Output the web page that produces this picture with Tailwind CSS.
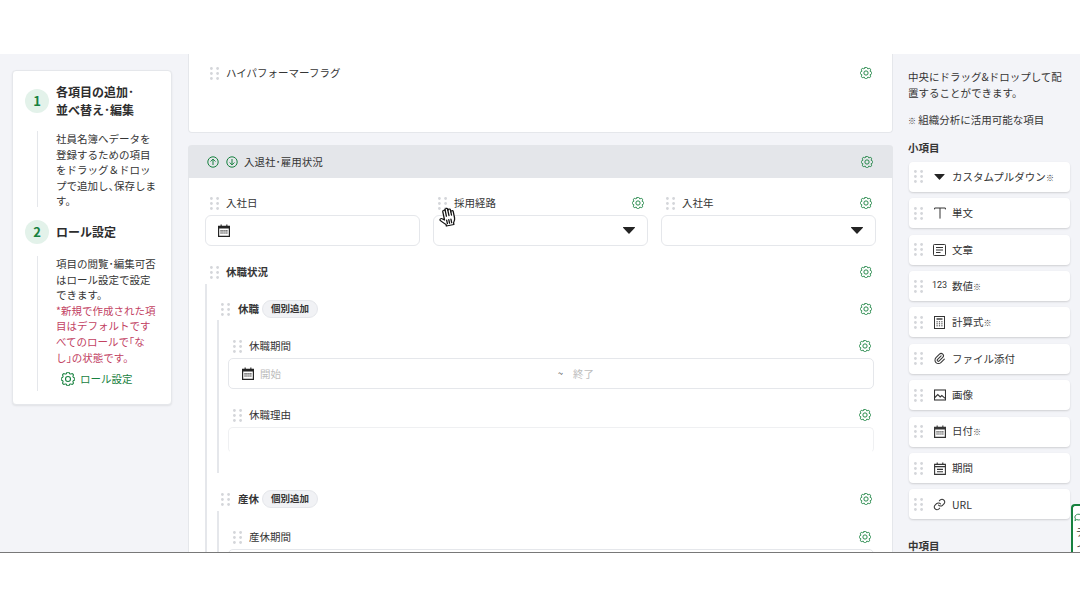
<!DOCTYPE html>
<html lang="ja">
<head>
<meta charset="utf-8">
<script src="https://cdn.jsdelivr.net/npm/@tailwindcss/browser@4"></script>
</head>
<body class="bg-white">
<svg class="hidden" xmlns="http://www.w3.org/2000/svg">
  <symbol id="gear" viewBox="3 3 18 18"><path fill="none" stroke="currentColor" stroke-width="1.4" stroke-linecap="round" stroke-linejoin="round" d="M10.325 4.317c.426-1.756 2.924-1.756 3.35 0a1.724 1.724 0 0 0 2.573 1.066c1.543-.94 3.31.826 2.37 2.37a1.724 1.724 0 0 0 1.065 2.572c1.756.426 1.756 2.924 0 3.35a1.724 1.724 0 0 0-1.066 2.573c.94 1.543-.826 3.31-2.37 2.37a1.724 1.724 0 0 0-2.572 1.065c-.426 1.756-2.924 1.756-3.35 0a1.724 1.724 0 0 0-2.573-1.066c-1.543.94-3.31-.826-2.37-2.37a1.724 1.724 0 0 0-1.065-2.572c-1.756-.426-1.756-2.924 0-3.35a1.724 1.724 0 0 0 1.066-2.573c-.94-1.543.826-3.31 2.37-2.37c1 .608 2.296.07 2.572-1.065z"/><circle cx="12" cy="12" r="3.2" fill="none" stroke="currentColor" stroke-width="1.4"/></symbol>
  <symbol id="drag" viewBox="0 0 9 13"><g fill="#d4d6da"><circle cx="1.4" cy="1.5" r="1.4"/><circle cx="7.6" cy="1.5" r="1.4"/><circle cx="1.4" cy="6.5" r="1.4"/><circle cx="7.6" cy="6.5" r="1.4"/><circle cx="1.4" cy="11.5" r="1.4"/><circle cx="7.6" cy="11.5" r="1.4"/></g></symbol>
  <symbol id="cal" viewBox="0 0 12 13"><path fill="none" stroke="currentColor" stroke-width="1.2" d="M.6 2.4h10.8v10H.6z"/><path fill="currentColor" d="M.6 2h10.8v2.6H.6zM2.6.4h1.1v2H2.6zM8.3.4h1.1v2H8.3zM2.4 6.2h1.3v1.2H2.4zM4.3 6.2h1.3v1.2H4.3zM6.3 6.2h1.3v1.2H6.3zM8.2 6.2h1.3v1.2H8.2zM2.4 8.4h1.3v1.2H2.4zM4.3 8.4h1.3v1.2H4.3zM6.3 8.4h1.3v1.2H6.3zM8.2 8.4h1.3v1.2H8.2z"/></symbol>
  <symbol id="caret" viewBox="0 0 12 7"><path fill="currentColor" d="M.4 0h11.2a.4.4 0 0 1 .3.7L6.5 6.4a.7.7 0 0 1-1 0L.1.7A.4.4 0 0 1 .4 0z"/></symbol>
</svg>

<div class="w-[1080px] h-[608px] overflow-hidden flex flex-col opacity-[0.99] font-['Noto_Sans_CJK_JP','Noto_Sans',sans-serif] text-[#333] text-[10.5px] leading-[15.6px]">
  <div class="h-[54px] shrink-0 bg-white"></div>

  <main class="relative h-[499px] shrink-0 flex overflow-hidden bg-[#f3f4f8] border-b border-[#777]">
    <!-- left -->
    <aside class="w-[188px] shrink-0 pl-3 pr-4 pt-4">
      <div class="bg-white border border-[#e5e7eb] rounded-[4px] shadow-[0_1px_2px_rgba(0,0,0,0.08)] pl-3 pr-2 pt-3 pb-3 h-[335px]">
        <div class="flex items-center gap-[7px]">
          <div class="w-6 h-6 shrink-0 rounded-full bg-[#e3f2ea] flex items-center justify-center text-[#15803d] text-[13px] font-bold">1</div>
          <div class="text-[12px] leading-[18px] font-bold text-[#2b2b2b]">各項目の追加･<br>並べ替え･編集</div>
        </div>
        <div class="mt-3 ml-3 pl-[18px] border-l border-[#e5e7eb] h-[76px] whitespace-nowrap">
          社員名簿へデータを<br>登録するための項目<br>をドラッグ＆ドロッ<br>プで追加し<span class="tracking-[-5px]">、</span>保存しま<br>す。
        </div>
        <div class="mt-[13px] flex items-center gap-[7px]">
          <div class="w-6 h-6 shrink-0 rounded-full bg-[#e3f2ea] flex items-center justify-center text-[#15803d] text-[13px] font-bold">2</div>
          <div class="text-[12px] leading-[18px] font-bold text-[#2b2b2b]">ロール設定</div>
        </div>
        <div class="mt-3 ml-3 pl-[18px] border-l border-[#e5e7eb] h-[135px] whitespace-nowrap">
          項目の閲覧･編集可否<br>はロール設定で設定<br>できます。
          <div class="text-[#c2405f]">*新規で作成された項<br>目はデフォルトです<br>べてのロールで｢な<br>し｣の状態です。</div>
          <div class="flex items-center gap-[5px] pl-[5px] h-[27px] text-[#15803d]">
            <svg class="w-[14px] h-[14px]"><use href="#gear"/></svg>
            <span>ロール設定</span>
          </div>
        </div>
      </div>
    </aside>

    <!-- centre -->
    <section class="w-[705px] shrink-0 h-full overflow-hidden">
      <div class="h-[79px] bg-white border border-t-0 border-[#e5e7eb] rounded-b-[4px] pl-[21px] pr-[20px] pt-[11px]">
        <div class="flex items-center justify-between h-[16px]">
          <div class="flex items-center gap-[7px]">
            <svg class="w-[9px] h-[13px]"><use href="#drag"/></svg>
            <span>ハイパフォーマーフラグ</span>
          </div>
          <svg class="w-3 h-3 text-[#15803d]"><use href="#gear"/></svg>
        </div>
      </div>

      <div class="mt-3 bg-white rounded-t-[4px] border-x border-[#e5e7eb] min-h-[420px]">
        <div class="-mx-px h-[33px] bg-[#e4e6ea] rounded-t-[4px] flex items-center pl-[19px] pr-[20px]">
          <svg class="w-3 h-3 text-[#15803d]" viewBox="0 0 12 12" fill="none" stroke="currentColor" stroke-width="1"><circle cx="6" cy="6" r="5.2"/><path d="M6 9V3.2M3.6 5.5 6 3.1l2.4 2.4"/></svg>
          <svg class="w-3 h-3 ml-[7px] text-[#15803d]" viewBox="0 0 12 12" fill="none" stroke="currentColor" stroke-width="1"><circle cx="6" cy="6" r="5.2"/><path d="M6 3v5.8M3.6 6.5 6 8.9l2.4-2.4"/></svg>
          <span class="ml-[6px]">入退社･雇用状況</span>
          <svg class="w-3 h-3 ml-auto text-[#15803d]"><use href="#gear"/></svg>
        </div>

        <div class="pt-4 pl-4 pr-4">
          <div class="grid grid-cols-3 gap-x-[13px]">
            <div>
              <div class="h-[18px] flex items-center gap-[7px] pl-[5px] pr-1">
                <svg class="w-[9px] h-[13px]"><use href="#drag"/></svg><span>入社日</span>
              </div>
              <div class="mt-[3px] h-[31px] border border-[#e5e7eb] rounded-[6px] flex items-center pl-3 text-[#222]">
                <svg class="w-3 h-[13px]"><use href="#cal"/></svg>
              </div>
            </div>
            <div>
              <div class="h-[18px] flex items-center gap-[7px] pl-[5px] pr-1">
                <svg class="w-[9px] h-[13px]"><use href="#drag"/></svg><span>採用経路</span>
                <svg class="w-3 h-3 ml-auto text-[#15803d]"><use href="#gear"/></svg>
              </div>
              <div class="mt-[3px] h-[31px] border border-[#e5e7eb] rounded-[6px] flex items-center justify-end pr-3 text-[#222]">
                <svg class="w-3 h-[7px]"><use href="#caret"/></svg>
              </div>
            </div>
            <div>
              <div class="h-[18px] flex items-center gap-[7px] pl-[5px] pr-1">
                <svg class="w-[9px] h-[13px]"><use href="#drag"/></svg><span>入社年</span>
                <svg class="w-3 h-3 ml-auto text-[#15803d]"><use href="#gear"/></svg>
              </div>
              <div class="mt-[3px] h-[31px] border border-[#e5e7eb] rounded-[6px] flex items-center justify-end pr-3 text-[#222]">
                <svg class="w-3 h-[7px]"><use href="#caret"/></svg>
              </div>
            </div>
          </div>

          <div class="mt-[17px] h-[18px] flex items-center gap-[7px] pl-[5px] pr-1 font-bold">
            <svg class="w-[9px] h-[13px]"><use href="#drag"/></svg><span>休職状況</span>
            <svg class="w-3 h-3 ml-auto text-[#15803d]"><use href="#gear"/></svg>
          </div>

          <div class="mt-[3px] border-l-2 border-[#e5e7eb] pl-[10px] pt-4 pr-[2px]">
            <div class="h-[18px] flex items-center pl-[4px] pr-[2px] font-bold">
              <svg class="w-[9px] h-[13px]"><use href="#drag"/></svg><span class="ml-2">休職</span>
              <span class="ml-[3px] h-[18px] w-[56px] rounded-full bg-[#f1f2f5] border border-[#e5e7eb] flex items-center justify-center text-[9.5px] text-[#333]">個別追加</span>
              <svg class="w-3 h-3 ml-auto text-[#15803d]"><use href="#gear"/></svg>
            </div>
            <div class="mt-[2px] h-[153px] border-l-2 border-[#e5e7eb] pl-[9px] pt-[17px]">
              <div class="h-[18px] flex items-center gap-[7px] pl-[5px] pr-[3px]">
                <svg class="w-[9px] h-[13px]"><use href="#drag"/></svg><span>休職期間</span>
                <svg class="w-3 h-3 ml-auto text-[#15803d]"><use href="#gear"/></svg>
              </div>
              <div class="mt-[3px] h-[31px] border border-[#e5e7eb] rounded-[5px] flex items-center pl-[13px] text-[#222]">
                <div class="w-[316px] flex items-center gap-[6px]">
                  <svg class="w-3 h-[13px]"><use href="#cal"/></svg><span class="text-[#bdbdbd]">開始</span>
                </div>
                <span class="text-[9px]">~</span><span class="ml-[10px] text-[#bdbdbd]">終了</span>
              </div>
              <div class="mt-[17px] h-[18px] flex items-center gap-[7px] pl-[5px] pr-[3px]">
                <svg class="w-[9px] h-[13px]"><use href="#drag"/></svg><span>休職理由</span>
                <svg class="w-3 h-3 ml-auto text-[#15803d]"><use href="#gear"/></svg>
              </div>
              <div class="mt-[3px] h-[26px] border border-[#eff0f2] border-b-transparent rounded-[5px]"></div>
            </div>

            <div class="mt-[17px] h-[18px] flex items-center pl-[4px] pr-[2px] font-bold">
              <svg class="w-[9px] h-[13px]"><use href="#drag"/></svg><span class="ml-2">産休</span>
              <span class="ml-[3px] h-[18px] w-[56px] rounded-full bg-[#f1f2f5] border border-[#e5e7eb] flex items-center justify-center text-[9.5px] text-[#333]">個別追加</span>
              <svg class="w-3 h-3 ml-auto text-[#15803d]"><use href="#gear"/></svg>
            </div>
            <div class="mt-[3px] h-[80px] border-l-2 border-[#e5e7eb] pl-[9px] pt-[17px]">
              <div class="h-[18px] flex items-center gap-[7px] pl-[5px] pr-[3px]">
                <svg class="w-[9px] h-[13px]"><use href="#drag"/></svg><span>産休期間</span>
                <svg class="w-3 h-3 ml-auto text-[#15803d]"><use href="#gear"/></svg>
              </div>
              <div class="mt-[3px] h-[31px] border border-[#e5e7eb] rounded-[5px]"></div>
            </div>
          </div>
        </div>
      </div>
    </section>

    <!-- right -->
    <aside class="flex-1 pl-[15px] pr-[10px] pt-[15px]">
      <p class="whitespace-nowrap">中央にドラッグ&amp;ドロップして配<br>置することができます。</p>
      <p class="mt-3 whitespace-nowrap"><span class="text-[8px]">※</span> 組織分析に活用可能な項目</p>
      <p class="mt-[11px] font-bold">小項目</p>
      <ul class="mt-[6.5px] ml-px flex flex-col gap-[6.4px]">
        <li class="h-[30px] bg-white rounded-[4px] shadow-[0_1px_2px_rgba(0,0,0,0.15)] flex items-center pl-[5px]">
          <svg class="w-[9px] h-[13px] shrink-0"><use href="#drag"/></svg>
          <span class="ml-1 w-[25px] flex justify-center text-[#222]"><svg class="w-[11px] h-[6px]"><use href="#caret"/></svg></span>
          <span>カスタムプルダウン<span class="text-[8px]">※</span></span>
        </li>
        <li class="h-[30px] bg-white rounded-[4px] shadow-[0_1px_2px_rgba(0,0,0,0.15)] flex items-center pl-[5px]">
          <svg class="w-[9px] h-[13px] shrink-0"><use href="#drag"/></svg>
          <span class="ml-1 w-[25px] flex justify-center text-[#333]"><svg class="w-3 h-3" viewBox="0 0 12 12" fill="none" stroke="currentColor" stroke-width="1"><path d="M.6 2.4V1h10.8v1.4M6 1v10.6"/></svg></span>
          <span>単文</span>
        </li>
        <li class="h-[30px] bg-white rounded-[4px] shadow-[0_1px_2px_rgba(0,0,0,0.15)] flex items-center pl-[5px]">
          <svg class="w-[9px] h-[13px] shrink-0"><use href="#drag"/></svg>
          <span class="ml-1 w-[25px] flex justify-center text-[#333]"><svg class="w-[13px] h-3" viewBox="0 0 13 12" fill="none" stroke="currentColor" stroke-width="1"><rect x=".5" y=".5" width="12" height="11" rx=".8"/><path d="M3 3.5h7M3 6h7M3 8.5h4.5"/></svg></span>
          <span>文章</span>
        </li>
        <li class="h-[30px] bg-white rounded-[4px] shadow-[0_1px_2px_rgba(0,0,0,0.15)] flex items-center pl-[5px]">
          <svg class="w-[9px] h-[13px] shrink-0"><use href="#drag"/></svg>
          <span class="ml-1 w-[25px] flex justify-center text-[#333] text-[9px] font-['Roboto']">123</span>
          <span>数値<span class="text-[8px]">※</span></span>
        </li>
        <li class="h-[30px] bg-white rounded-[4px] shadow-[0_1px_2px_rgba(0,0,0,0.15)] flex items-center pl-[5px]">
          <svg class="w-[9px] h-[13px] shrink-0"><use href="#drag"/></svg>
          <span class="ml-1 w-[25px] flex justify-center text-[#333]"><svg class="w-[11px] h-[13px]" viewBox="0 0 11 13" fill="none" stroke="currentColor" stroke-width="1"><rect x=".5" y=".5" width="10" height="12"/><path d="M2.5 3h6" stroke-width="1.4"/><path d="M2.5 5.8h1.2M4.9 5.8h1.2M7.3 5.8h1.2M2.5 7.8h1.2M4.9 7.8h1.2M7.3 7.8h1.2M2.5 9.8h1.2M4.9 9.8h1.2M7.3 9.8h1.2"/></svg></span>
          <span>計算式<span class="text-[8px]">※</span></span>
        </li>
        <li class="h-[30px] bg-white rounded-[4px] shadow-[0_1px_2px_rgba(0,0,0,0.15)] flex items-center pl-[5px]">
          <svg class="w-[9px] h-[13px] shrink-0"><use href="#drag"/></svg>
          <span class="ml-1 w-[25px] flex justify-center text-[#333]"><svg class="w-[13px] h-[13px]" viewBox="0 0 24 24" fill="none" stroke="currentColor" stroke-width="1.9" stroke-linecap="round" stroke-linejoin="round"><path d="M15 7l-6.5 6.5a1.5 1.5 0 0 0 3 3L18 10a3 3 0 0 0-6-6l-6.5 6.5a4.5 4.5 0 0 0 9 9L21 13"/></svg></span>
          <span>ファイル添付</span>
        </li>
        <li class="h-[30px] bg-white rounded-[4px] shadow-[0_1px_2px_rgba(0,0,0,0.15)] flex items-center pl-[5px]">
          <svg class="w-[9px] h-[13px] shrink-0"><use href="#drag"/></svg>
          <span class="ml-1 w-[25px] flex justify-center text-[#333]"><svg class="w-3 h-3" viewBox="0 0 12 12" fill="none" stroke="currentColor" stroke-width="1.1"><rect x=".5" y="1" width="11" height="10"/><path d="M.8 8.5 3.8 5.5l2.4 2.4 1.6-1.4 3.4 2.8"/></svg></span>
          <span>画像</span>
        </li>
        <li class="h-[30px] bg-white rounded-[4px] shadow-[0_1px_2px_rgba(0,0,0,0.15)] flex items-center pl-[5px]">
          <svg class="w-[9px] h-[13px] shrink-0"><use href="#drag"/></svg>
          <span class="ml-1 w-[25px] flex justify-center text-[#333]"><svg class="w-3 h-[13px]"><use href="#cal"/></svg></span>
          <span>日付<span class="text-[8px]">※</span></span>
        </li>
        <li class="h-[30px] bg-white rounded-[4px] shadow-[0_1px_2px_rgba(0,0,0,0.15)] flex items-center pl-[5px]">
          <svg class="w-[9px] h-[13px] shrink-0"><use href="#drag"/></svg>
          <span class="ml-1 w-[25px] flex justify-center text-[#333]"><svg class="w-3 h-[13px]" viewBox="0 0 12 13" fill="none" stroke="currentColor" stroke-width="1.1"><path d="M.6 2.4h10.8v10H.6zM.6 4.6h10.8M3.2.4v2M8.8.4v2M3 7.4h6M3 9.8h6"/></svg></span>
          <span>期間</span>
        </li>
        <li class="h-[30px] bg-white rounded-[4px] shadow-[0_1px_2px_rgba(0,0,0,0.15)] flex items-center pl-[5px]">
          <svg class="w-[9px] h-[13px] shrink-0"><use href="#drag"/></svg>
          <span class="ml-1 w-[25px] flex justify-center text-[#333]"><svg class="w-[13px] h-[13px]" viewBox="0 0 24 24" fill="none" stroke="currentColor" stroke-width="1.9" stroke-linecap="round" stroke-linejoin="round"><path d="M10 13a5 5 0 0 0 7.5.5l3-3a5 5 0 0 0-7-7l-1.8 1.7"/><path d="M14 11a5 5 0 0 0-7.5-.5l-3 3a5 5 0 0 0 7 7l1.7-1.7"/></svg></span>
          <span>URL</span>
        </li>
      </ul>
      <p class="mt-[19px] font-bold">中項目</p>
    </aside>

    <!-- chat tab -->
    <div class="absolute right-0 bottom-0 w-[9px] h-[48px] bg-white border-l-2 border-t-2 border-[#15803d] rounded-tl-[4px] overflow-hidden pt-[7px]">
      <svg class="ml-px w-[9px] h-[9px] text-[#15803d]" viewBox="0 0 10 9" fill="none" stroke="currentColor" stroke-width="1"><path d="M1 4a4 3.2 0 1 1 2 2.8L1 8l.6-2A3 3 0 0 1 1 4z"/></svg>
      <div class="ml-[3px] mt-[3px] text-[10px] leading-[13px] text-[#333] whitespace-nowrap">デ<br>ィ</div>
    </div>

    <!-- hand cursor -->
    <svg class="absolute left-[438px] top-[153px] w-[18px] h-[20px] -rotate-12" preserveAspectRatio="none" viewBox="0 0 18 24" fill="#fff" stroke="#111" stroke-width="1.3" stroke-linejoin="round" stroke-linecap="round">
      <path d="M6 15V4.5a1.3 1.3 0 0 1 2.6 0V3a1.3 1.3 0 0 1 2.6 0v1.5a1.3 1.3 0 0 1 2.6 0V7a1.2 1.2 0 0 1 2.4 0v8c0 2.5-1 4-2 5.5v2H6.5v-2C5 19 3.4 16.8 1.8 14.6c-1.1-1.5.9-3 2.1-1.7z"/>
      <path d="M8.6 4.5V11M11.2 4.5V11M13.8 7V11M8 15.5v4.5M10.2 15.5v4.5M12.4 15.5v4.5" fill="none"/>
    </svg>
  </main>

  <div class="flex-1 bg-white"></div>
</div>
</body>
</html>
